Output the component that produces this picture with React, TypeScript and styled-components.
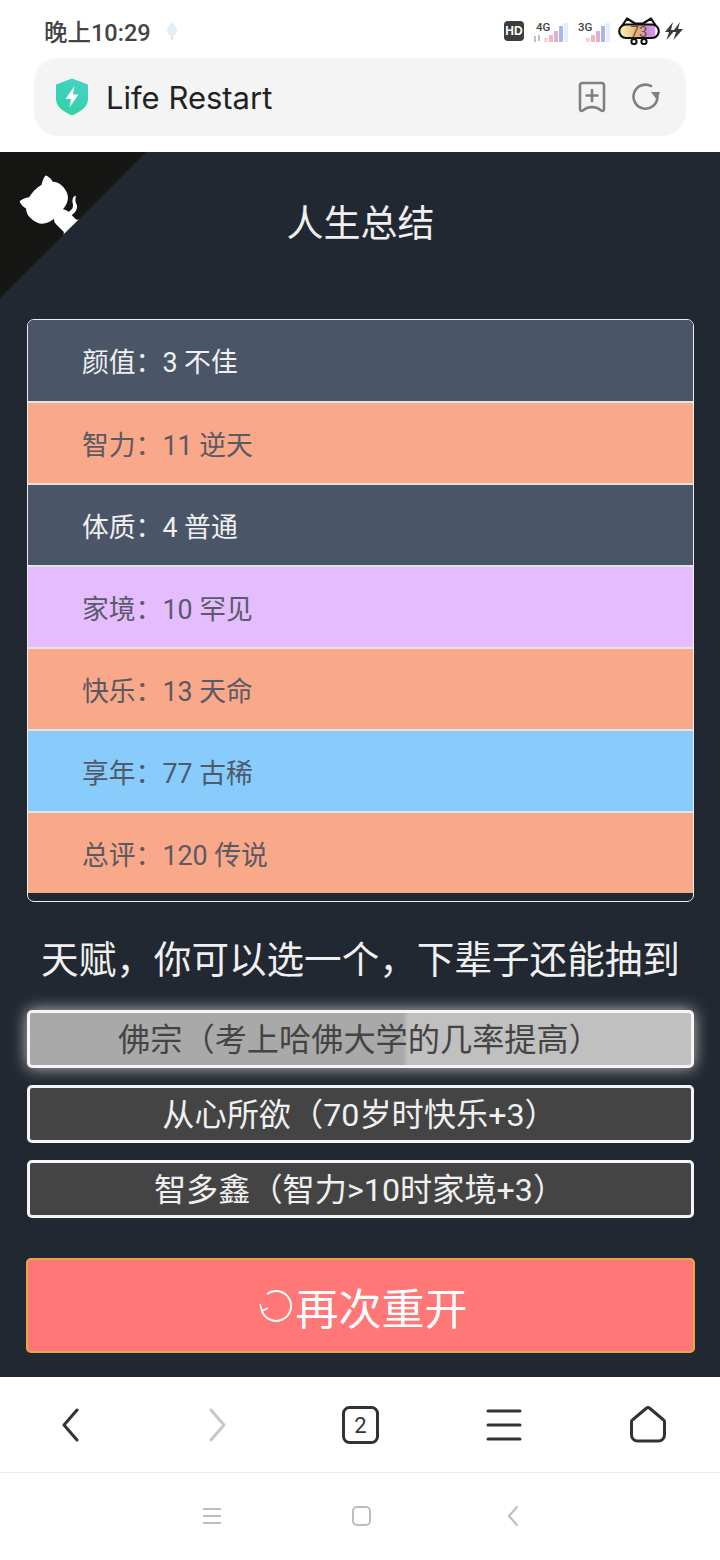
import styled, { createGlobalStyle } from "styled-components";

const GlobalStyle = createGlobalStyle`
  html, body {
    margin: 0;
    padding: 0;
    background: #fff;
  }
  * {
    box-sizing: border-box;
  }
`;

const FONT = `Roboto, "Noto Sans CJK SC", sans-serif`;

const Page = styled.div`
  width: 720px;
  height: 1560px;
  display: flex;
  flex-direction: column;
  font-family: ${FONT};
  text-spacing-trim: space-all;
  overflow: hidden;
`;

const TopArea = styled.header`
  height: 152px;
  flex: none;
  background: #fff;
`;

const StatusBar = styled.div`
  height: 58px;
  padding: 4px 37px 0 44px;
  display: flex;
  align-items: center;
  justify-content: space-between;
`;

const StatusLeft = styled.div`
  display: flex;
  align-items: center;
  gap: 14px;
`;

const Clock = styled.span`
  font-size: 23.5px;
  font-weight: 500;
  color: #444;
`;

const StatusRight = styled.div`
  display: flex;
  align-items: center;
  gap: 6px;
`;

const HdBadge = styled.span`
  width: 20px;
  height: 20px;
  border-radius: 4px;
  background: #3d3d3d;
  color: #fff;
  font-family: "Liberation Sans", sans-serif;
  font-size: 12px;
  font-weight: 700;
  display: flex;
  align-items: center;
  justify-content: center;
  margin-right: 4px;
`;

const UrlBar = styled.div`
  height: 78px;
  margin: 0 34px;
  padding: 0 26px 0 21px;
  border-radius: 24px;
  background: #f4f4f4;
  display: flex;
  align-items: center;
`;

const UrlText = styled.span`
  font-family: Inter, Roboto, sans-serif;
  font-size: 31px;
  color: #222;
  margin-left: 17px;
  flex: 1;
`;

const UrlActions = styled.div`
  display: flex;
  align-items: center;
  gap: 26px;
`;

const Main = styled.main`
  position: relative;
  height: 1225px;
  flex: none;
  background: #222831;
  padding: 0 25px 0 26px;
  display: flex;
  flex-direction: column;
`;

const Corner = styled.svg`
  position: absolute;
  top: 0;
  left: 0;
  width: 146px;
  height: 146px;
  transform: scaleX(-1);
  fill: #151513;
  color: #fff;
`;

const Title = styled.h1`
  margin: 48px 0 0;
  height: 50px;
  line-height: 50px;
  text-align: center;
  font-size: 37px;
  font-weight: 400;
  color: #f0f0f0;
`;

const PropertyList = styled.ul`
  list-style: none;
  margin: 69px 1px 0;
  padding: 0 0 8px;
  border: 1px solid #eeeeee;
  border-radius: 7px;
  overflow: hidden;
  display: flex;
  flex-direction: column;
`;

const PropertyRow = styled.li<{ $bg: string; $color: string }>`
  height: 82px;
  padding-left: 54px;
  display: flex;
  align-items: center;
  font-size: 26.8px;
  background: ${({ $bg }) => $bg};
  color: ${({ $color }) => $color};
  border-bottom: 2px solid #e4e4e4;

  &:first-child {
    height: 83px;
  }

  &:last-child {
    height: 80px;
    border-bottom: none;
  }
`;

const TalentHeading = styled.h2`
  margin: 34px 0 0;
  height: 48px;
  line-height: 48px;
  text-align: center;
  font-size: 37.6px;
  font-weight: 400;
  color: #f0f0f0;
  white-space: nowrap;
`;

const TalentList = styled.div`
  margin: 26px 1px 0;
  display: flex;
  flex-direction: column;
  gap: 17px;
`;

const TalentButton = styled.button<{ $selected?: boolean }>`
  height: 58px;
  padding: 0 2px 5px 0;
  border: 3px solid #f5f5f5;
  border-radius: 5px;
  font-family: ${FONT};
  font-size: 32.2px;
  color: ${({ $selected }) => ($selected ? "#444" : "#f0f0f0")};
  background: ${({ $selected }) =>
    $selected ? "linear-gradient(90deg, #a9a9a9 56.4%, #c0c0c0 57.2%)" : "#444444"};
  box-shadow: ${({ $selected }) => ($selected ? "0 0 16px rgba(255,255,255,0.7)" : "none")};
`;

const RestartButton = styled.button`
  margin-top: 40px;
  height: 95px;
  padding: 0 0 0 4px;
  border: 2px solid #e8aa40;
  border-radius: 5px;
  background: #ff7777;
  color: #fff;
  font-family: ${FONT};
  font-size: 43px;
  display: flex;
  align-items: center;
  justify-content: center;
  gap: 2px;
`;

const BottomNav = styled.nav`
  height: 96px;
  flex: none;
  background: #fff;
  border-bottom: 1px solid #eeeeee;
  padding: 0 44px 0 42px;
  display: flex;
  align-items: center;
  justify-content: space-between;
`;

const NavSlot = styled.span<{ $shift?: number }>`
  width: 56px;
  height: 56px;
  padding-left: ${({ $shift }) => $shift ?? 0}px;
  display: flex;
  align-items: center;
  justify-content: center;
`;

const SystemNav = styled.div`
  flex: 1;
  background: #fff;
  display: flex;
  align-items: center;
  gap: 131px;
  padding-left: 203px;
  padding-bottom: 2px;

  svg:last-child {
    margin-left: 5px;
  }
`;

const ROWS = [
  { text: "颜值：3 不佳", bg: "#4a5568", color: "#f0f0f0" },
  { text: "智力：11 逆天", bg: "#f9a88a", color: "#5a5a62" },
  { text: "体质：4 普通", bg: "#4a5568", color: "#f0f0f0" },
  { text: "家境：10 罕见", bg: "#e5bdff", color: "#5a5a6a" },
  { text: "快乐：13 天命", bg: "#f9a88a", color: "#5a5a62" },
  { text: "享年：77 古稀", bg: "#87ccfa", color: "#4f5a6a" },
  { text: "总评：120 传说", bg: "#f9a88a", color: "#5a5a62" },
];

function Signal({ label, arrows }: { label: string; arrows?: boolean }) {
  return (
    <svg width="36" height="26" viewBox="0 -4 36 26">
      <text x="2" y="9" fontFamily="Roboto, sans-serif" fontSize="11.5" fontWeight="500" fill="#444">{label}</text>
      {arrows && <path d="M1 14v6M5 13v6" stroke="#999" strokeWidth="1.2" />}
      <rect x="10" y="16" width="4" height="4" fill="#f6d8cc" />
      <rect x="15" y="13" width="4" height="7" fill="#f0b8bc" />
      <rect x="20" y="9" width="4" height="11" fill="#e0b0d4" />
      <rect x="25" y="4" width="4" height="16" fill="#a9b6ea" />
      <rect x="30" y="1" width="4" height="19" fill="#e9ebfb" />
    </svg>
  );
}

export default function App() {
  return (
    <Page>
      <GlobalStyle />
      <TopArea>
        <StatusBar>
          <StatusLeft>
            <Clock>晚上10:29</Clock>
            <svg width="14" height="20" viewBox="0 0 14 20">
              <path d="M7 1c3 3 5 6 5 9a5 5 0 0 1-10 0c0-3 2-6 5-9z" fill="#e4f0f6" />
              <path d="M7 15v4" stroke="#d6e6ee" strokeWidth="2" />
            </svg>
          </StatusLeft>
          <StatusRight>
            <HdBadge>HD</HdBadge>
            <Signal label="4G" arrows />
            <Signal label="3G" />
            <svg width="42" height="28" viewBox="0 0 42 28">
              <defs>
                <linearGradient id="batt" x1="0" x2="1">
                  <stop offset="0.1" stopColor="#f6e6b0" />
                  <stop offset="0.45" stopColor="#eeb070" />
                  <stop offset="0.75" stopColor="#d68ae0" />
                  <stop offset="0.9" stopColor="#d0a0ee" />
                  <stop offset="0.92" stopColor="#fff" />
                </linearGradient>
              </defs>
              <path d="M4 9 L9 1.5 L17 6.5 H25 L33 1.5 L38 9" fill="none" stroke="#111" strokeWidth="2.2" strokeLinejoin="round" />
              <rect x="1.2" y="7.5" width="39.6" height="13.5" rx="6.7" fill="url(#batt)" stroke="#111" strokeWidth="2.2" />
              <circle cx="16" cy="24.5" r="2.6" fill="none" stroke="#111" strokeWidth="2" />
              <circle cx="26" cy="24.5" r="2.6" fill="none" stroke="#111" strokeWidth="2" />
              <text x="21" y="20" textAnchor="middle" fontFamily="Roboto, sans-serif" fontSize="15" fill="#554">73</text>
            </svg>
            <svg width="18" height="20" viewBox="0 0 18 20" style={{ marginLeft: -1 }}>
              <path d="M8 1 L0 11 H4 L1.5 19 L10 9 H6 Z M15 1 L7.5 11 H11 L8.5 19 L18 8 H13 Z" fill="#3a3a3a" />
            </svg>
          </StatusRight>
        </StatusBar>
        <UrlBar>
          <svg width="34" height="38" viewBox="0 0 34 38">
            <defs>
              <linearGradient id="shield" x1="0.7" y1="0" x2="0.3" y2="1">
                <stop offset="0" stopColor="#45d2c6" />
                <stop offset="1" stopColor="#2fd3a4" />
              </linearGradient>
            </defs>
            <path d="M17 0.5 L33 6.5 V21 C33 29 25 34 17 37.5 C9 34 1 29 1 21 V6.5 Z" fill="url(#shield)" />
            <path d="M19.5 8 L10.5 21 H16 L14.5 29.5 L23.5 16.5 H18 Z" fill="#fff" />
          </svg>
          <UrlText>Life Restart</UrlText>
          <UrlActions>
            <svg width="28" height="32" viewBox="0 0 28 32" fill="none" stroke="#808080" strokeWidth="2.6" strokeLinejoin="round" strokeLinecap="round">
              <path d="M4 2 H24 A2.5 2.5 0 0 1 26 4 V28 C26 30 24.5 30.5 23 29.5 C19 25 9 25 5 29.5 C3.5 30.5 2 30 2 28 V4 A2.5 2.5 0 0 1 4 2 Z" />
              <path d="M14 9 V20 M8.5 14.5 H19.5" />
            </svg>
            <svg width="28" height="28" viewBox="0 0 28 28" fill="none">
              <path d="M25.5 14 A12 12 0 1 1 19 3" stroke="#808080" strokeWidth="2.6" strokeLinecap="round" />
              <path d="M19 9 L28 9 L25 17 Z" fill="#808080" />
            </svg>
          </UrlActions>
        </UrlBar>
      </TopArea>

      <Main>
        <Corner viewBox="0 0 250 250">
          <path d="M0,0 L115,115 L130,115 L142,142 L250,250 L250,0 Z" />
          <path
            d="M128.3,109.0 C113.8,99.7 119.0,89.6 119.0,89.6 C122.0,82.7 120.5,78.6 120.5,78.6 C119.2,72.0 123.4,76.3 123.4,76.3 C127.3,80.9 125.5,87.3 125.5,87.3 C122.9,97.6 130.6,101.9 134.4,103.2"
            fill="currentColor"
          />
          <path
            d="M115.0,115.0 C114.9,115.1 118.7,116.5 119.8,115.4 L133.7,101.6 C136.9,99.2 139.9,98.4 142.2,98.6 C133.8,88.0 127.5,74.4 143.8,58.0 C148.5,53.4 154.0,51.2 159.7,51.0 C160.3,49.4 163.2,43.6 171.4,40.1 C171.4,40.1 176.1,42.5 178.8,56.2 C183.1,58.6 187.2,61.8 190.9,65.4 C194.5,69.0 197.7,73.2 200.1,77.6 C213.8,80.2 216.3,84.9 216.3,84.9 C212.7,93.1 206.9,96.0 205.4,96.6 C205.1,102.4 203.0,107.8 198.3,112.5 C181.9,128.9 168.3,122.5 157.7,114.1 C157.9,116.9 156.7,120.9 152.7,124.9 L141.0,136.5 C139.8,137.7 141.6,141.9 141.8,141.8 Z"
            fill="currentColor"
          />
        </Corner>

        <Title>人生总结</Title>

        <PropertyList>
          {ROWS.map((row) => (
            <PropertyRow key={row.text} $bg={row.bg} $color={row.color}>
              {row.text}
            </PropertyRow>
          ))}
        </PropertyList>

        <TalentHeading>天赋，你可以选一个，下辈子还能抽到</TalentHeading>

        <TalentList>
          <TalentButton $selected>佛宗（考上哈佛大学的几率提高）</TalentButton>
          <TalentButton>从心所欲（70岁时快乐+3）</TalentButton>
          <TalentButton>智多鑫（智力&gt;10时家境+3）</TalentButton>
        </TalentList>

        <RestartButton>
          <svg width="36" height="36" viewBox="0 0 36 36" fill="none" stroke="#fff" strokeWidth="2">
            <path d="M9 6 A15 15 0 1 1 3.6 22" />
            <path d="M2 16 L4 23 L10 20" strokeWidth="1.6" />
          </svg>
          再次重开
        </RestartButton>
      </Main>

      <BottomNav>
        <NavSlot>
          <svg width="18" height="34" viewBox="0 0 18 34" fill="none" stroke="#333" strokeWidth="3" strokeLinecap="round" strokeLinejoin="round">
            <path d="M16 2 L3 17 L16 32" />
          </svg>
        </NavSlot>
        <NavSlot $shift={7}>
          <svg width="18" height="34" viewBox="0 0 18 34" fill="none" stroke="#c8c8c8" strokeWidth="3" strokeLinecap="round" strokeLinejoin="round">
            <path d="M2 2 L15 17 L2 32" />
          </svg>
        </NavSlot>
        <NavSlot $shift={2}>
          <svg width="37" height="38" viewBox="0 0 37 38" fill="none">
            <rect x="1.5" y="1.5" width="34" height="35" rx="6" stroke="#333" strokeWidth="3" />
            <text x="18.5" y="27" textAnchor="middle" fontFamily="Roboto, sans-serif" fontSize="22" fill="#333">2</text>
          </svg>
        </NavSlot>
        <NavSlot>
          <svg width="36" height="32" viewBox="0 0 36 32" stroke="#333" strokeWidth="3" strokeLinecap="round">
            <path d="M2 2 H34 M2 16 H34 M2 30 H34" />
          </svg>
        </NavSlot>
        <NavSlot>
          <svg width="36" height="37" viewBox="0 0 36 37" fill="none" stroke="#333" strokeWidth="3" strokeLinejoin="round">
            <path d="M16 2.5 a3 3 0 0 1 4 0 L33 13.5 a3 3 0 0 1 1.5 3 V29 a6 6 0 0 1 -6 6 H7.5 a6 6 0 0 1 -6 -6 V16.5 a3 3 0 0 1 1.5 -3 Z" />
          </svg>
        </NavSlot>
      </BottomNav>

      <SystemNav>
        <svg width="18" height="18" viewBox="0 0 18 18" stroke="#bdbdbd" strokeWidth="2">
          <path d="M0 2 H18 M0 9 H18 M0 16 H18" />
        </svg>
        <svg width="19" height="20" viewBox="0 0 19 20" fill="none" stroke="#bdbdbd" strokeWidth="2">
          <rect x="1" y="1" width="17" height="18" rx="4" />
        </svg>
        <svg width="12" height="20" viewBox="0 0 12 20" fill="none" stroke="#bdbdbd" strokeWidth="2" strokeLinecap="round">
          <path d="M10 1 L2 10 L10 19" />
        </svg>
      </SystemNav>
    </Page>
  );
}
